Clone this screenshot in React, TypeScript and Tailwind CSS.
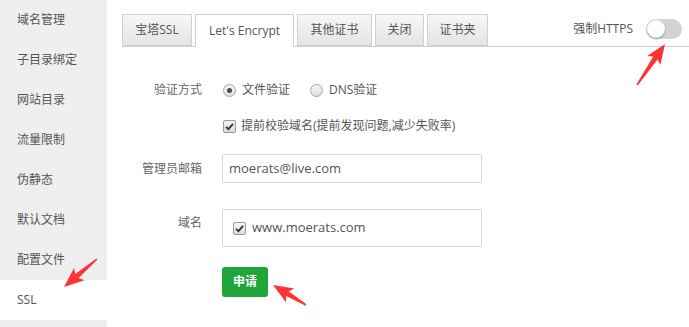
import React from 'react';

const menu = ['域名管理', '子目录绑定', '网站目录', '流量限制', '伪静态', '默认文档', '配置文件', 'SSL'];

const tabs = [
  { label: '宝塔SSL', w: 'w-[70px]' },
  { label: "Let's Encrypt", w: 'w-[99px]', active: true },
  { label: '其他证书', w: 'w-[75px]' },
  { label: '关闭', w: 'w-[49px]' },
  { label: '证书夹', w: 'w-[61px]' },
];

function arrowPoints(x1: number, y1: number, x2: number, y2: number) {
  const dx = x2 - x1;
  const dy = y2 - y1;
  const len = Math.hypot(dx, dy);
  const ux = dx / len;
  const uy = dy / len;
  const px = -uy;
  const py = ux;
  const head = 17;
  const nx = x2 - ux * head;
  const ny = y2 - uy * head;
  const bx = x2 - ux * (head + 3);
  const by = y2 - uy * (head + 3);
  const pts = [
    [x1 + px * 0.8, y1 + py * 0.8],
    [nx + px * 2.6, ny + py * 2.6],
    [bx + px * 8, by + py * 8],
    [x2, y2],
    [bx - px * 8, by - py * 8],
    [nx - px * 2.6, ny - py * 2.6],
    [x1 - px * 0.8, y1 - py * 0.8],
  ];
  return pts.map((p) => p.join(',')).join(' ');
}

function Radio({ checked }: { checked?: boolean }) {
  return (
    <span className="w-[13px] h-[13px] rounded-full border border-[#a8a8a8] bg-gradient-to-b from-[#f4f4f4] to-[#dedede] flex items-center justify-center">
      {checked && <span className="w-[5px] h-[5px] rounded-full bg-[#4a4a4a]" />}
    </span>
  );
}

function Check() {
  return (
    <span className="w-[13px] h-[13px] rounded-[2px] border border-[#9a9a9a] bg-gradient-to-b from-[#f4f4f4] to-[#dcdcdc] flex items-center justify-center">
      <svg width="9" height="9" viewBox="0 0 9 9">
        <path d="M1 4.8 L3.4 7.2 L8 1.8" fill="none" stroke="#333" strokeWidth="1.8" />
      </svg>
    </span>
  );
}

export default function App() {
  return (
    <div className="relative w-[689px] h-[327px] flex bg-white overflow-hidden font-['Open_Sans','Noto_Sans_CJK_SC',sans-serif] text-[12px] text-[#555]">
      {/* Sidebar */}
      <div className="w-[107px] bg-[#efefef] flex flex-col flex-shrink-0">
        {menu.map((m) => (
          <div key={m} className={`h-[40px] flex items-center pl-[17px] ${m === 'SSL' ? 'bg-white' : ''}`}>
            {m}
          </div>
        ))}
      </div>

      {/* Main */}
      <div className="flex-1 pt-[15px] pl-[15px]">
        <div className="flex justify-between border-b border-[#cfcfdc] h-[32px]">
          <div className="flex gap-[3px] items-end">
            {tabs.map((t) => (
              <div
                key={t.label}
                className={`${t.w} h-[32px] flex items-center justify-center border border-[#cfcfdc] ${
                  t.active ? 'bg-white border-b-white -mb-px h-[33px]' : 'bg-gradient-to-b from-[#f7f7f7] to-[#e4e4e4]'
                } text-[#555]`}
              >
                {t.label}
              </div>
            ))}
          </div>
          <div className="flex items-center gap-[13px] pr-[7px] h-[25px] self-start mt-[1px]">
            <span>强制HTTPS</span>
            <span className="w-[36px] h-[20px] rounded-full bg-[#d3d3d3] flex items-center px-[1px]">
              <span className="w-[18px] h-[18px] rounded-full bg-white shadow-[0_1px_2px_rgba(0,0,0,0.35)]" />
            </span>
          </div>
        </div>

        <div className="flex flex-col">
          <div className="flex items-center h-[20px] mt-[33px]">
            <div className="w-[80px] text-right text-[#666]">验证方式</div>
            <div className="flex items-center ml-[21px]">
              <Radio checked />
              <span className="ml-[6px]">文件验证</span>
              <span className="ml-[20px]"><Radio /></span>
              <span className="ml-[6px]">DNS验证</span>
            </div>
          </div>

          <div className="flex items-center h-[20px] mt-[16px]">
            <div className="w-[80px]" />
            <div className="flex items-center ml-[21px]">
              <Check />
              <span className="ml-[5px]">提前校验域名(提前发现问题,减少失败率)</span>
            </div>
          </div>

          <div className="flex items-center mt-[18px]">
            <div className="w-[80px] text-right text-[#666]">管理员邮箱</div>
            <div className="ml-[20px] w-[260px] h-[29px] border border-[#d8d8d8] rounded-[2px] flex items-center pl-[6px] text-[13px] text-[#555]">
              moerats@live.com
            </div>
          </div>

          <div className="flex items-start mt-[26px]">
            <div className="w-[80px] text-right text-[#666] pt-[5px]">域名</div>
            <div className="ml-[20px] w-[260px] h-[38px] border border-[#d8d8d8] rounded-[2px] flex items-center pl-[10px]">
              <Check />
              <span className="ml-[6px] text-[13px]">www.moerats.com</span>
            </div>
          </div>

          <div className="flex mt-[20px]">
            <div className="w-[80px]" />
            <button className="ml-[20px] w-[46px] h-[30px] rounded-[3px] bg-[#20a53a] text-white font-bold text-[12px] flex items-center justify-center">
              申请
            </button>
          </div>
        </div>
      </div>

      {/* Annotation arrows */}
      <svg className="absolute inset-0 pointer-events-none" width="689" height="327">
        <polygon points={arrowPoints(97, 259, 64, 287)} fill="#ff3333" />
        <polygon points={arrowPoints(637, 85, 665, 44)} fill="#ff3333" />
        <polygon points={arrowPoints(306, 305, 273, 285)} fill="#ff3333" />
      </svg>
    </div>
  );
}
